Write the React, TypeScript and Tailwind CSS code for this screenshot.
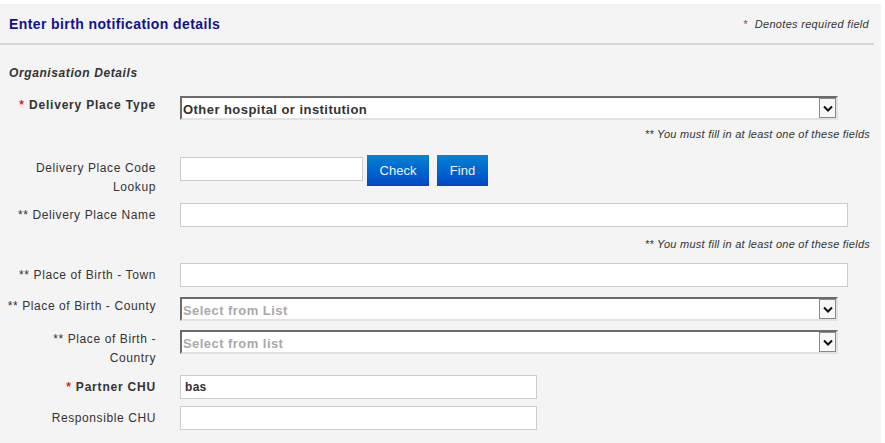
const font = { fontFamily: '"Liberation Sans", Arial, sans-serif' };

function Chevron() {
  return (
    <span className="flex h-[20px] w-[17px] items-center justify-center border border-[#8a8a8a] bg-[#f7f7f7]">
      <svg width="10" height="7" viewBox="0 0 10 7">
        <path d="M1 1.5 L5 5.5 L9 1.5" fill="none" stroke="#111" strokeWidth="2" />
      </svg>
    </span>
  );
}

function Select({ value, placeholder }: { value: string; placeholder?: boolean }) {
  return (
    <div className="flex h-[24px] w-[658px] items-center border-t-2 border-l-2 border-r-2 border-b-2 border-t-[#6b6b6b] border-l-[#6b6b6b] border-r-[#e2e2e2] border-b-[#e2e2e2] bg-white">
      <span
        className={
          "flex-1 pl-[1px] pt-[3px] text-[13px] font-bold tracking-[0.45px] " +
          (placeholder ? "text-[#a9a9a9]" : "text-[#333]")
        }
      >
        {value}
      </span>
      <Chevron />
    </div>
  );
}

function Input({ w, value }: { w: string; value?: string }) {
  return (
    <div className={"flex h-[24px] items-center border border-[#cccccc] bg-white pl-[4px] text-[12px] font-bold tracking-[0.3px] text-[#333] " + w}>
      {value}
    </div>
  );
}

function Label({ children, pt }: { children: React.ReactNode; pt: string }) {
  return (
    <div className={"w-[156px] shrink-0 text-right text-[12px] leading-[19px] tracking-[0.6px] text-[#333] " + pt}>
      {children}
    </div>
  );
}

function Note() {
  return (
    <div className="pr-[11px] text-right text-[11px] italic leading-[14px] tracking-[0.25px] text-[#333]">
      ** You must fill in at least one of these fields
    </div>
  );
}

function Star() {
  return <span className="text-[#d81e1e]">*</span>;
}

export default function App() {
  return (
    <div className="min-h-screen bg-white pt-[4px]" style={font}>
      <div className="mr-[4px] min-h-[439px] bg-[#f4f4f4] pb-[12px]">
        {/* Header */}
        <div className="mr-[7px] flex items-center justify-between border-b-2 border-[#d6d6d6] pb-[9px] pl-[9px] pr-[5px] pt-[10px]">
          <h1 className="text-[14px] font-bold leading-[20px] tracking-[0.4px] text-[#12128c]">Enter birth notification details</h1>
          <span className="text-[11px] italic tracking-[0.3px] text-[#333]">
            <span className="not-italic text-[#d81e1e]">*</span>&nbsp; Denotes required field
          </span>
        </div>

        <div className="mt-[20px] pl-[9px] text-[12px] font-bold italic leading-[16px] tracking-[0.6px] text-[#333]">Organisation Details</div>

        {/* Delivery Place Type */}
        <div className="mt-[15px] flex items-start gap-[24px]">
          <Label pt="pt-0">
            <span className="font-bold tracking-[0.8px]">
              <Star /> Delivery Place Type
            </span>
          </Label>
          <Select value="Other hospital or institution" />
        </div>
        <div className="mt-[7px]">
          <Note />
        </div>

        {/* Code lookup */}
        <div className="mt-[14px] flex items-start gap-[24px]">
          <Label pt="pt-[4px]">
            Delivery Place Code
            <br />
            Lookup
          </Label>
          <div className="flex items-start">
            <div className="mt-[2px]">
              <Input w="w-[183px]" />
            </div>
            <button className="ml-[4px] h-[31px] w-[62px] bg-gradient-to-b from-[#0c82d2] to-[#0046c6] text-[13px] text-[#eef4ff]">
              Check
            </button>
            <button className="ml-[8px] h-[31px] w-[51px] bg-gradient-to-b from-[#0c82d2] to-[#0046c6] text-[13px] text-[#eef4ff]">
              Find
            </button>
          </div>
        </div>

        {/* Delivery place name */}
        <div className="mt-[6px] flex items-start gap-[24px]">
          <Label pt="pt-[3px]">** Delivery Place Name</Label>
          <Input w="w-[668px]" />
        </div>
        <div className="mt-[10px]">
          <Note />
        </div>

        {/* Town */}
        <div className="mt-[12px] flex items-start gap-[24px]">
          <Label pt="pt-[3px]">** Place of Birth - Town</Label>
          <Input w="w-[668px]" />
        </div>

        {/* County */}
        <div className="mt-[10px] flex items-start gap-[24px]">
          <Label pt="pt-0">** Place of Birth - County</Label>
          <Select value="Select from List" placeholder />
        </div>

        {/* Country */}
        <div className="mt-[9px] flex items-start gap-[24px]">
          <Label pt="pt-0">
            ** Place of Birth -
            <br />
            Country
          </Label>
          <Select value="Select from list" placeholder />
        </div>

        {/* Partner CHU */}
        <div className="mt-[7px] flex items-start gap-[24px]">
          <Label pt="pt-[3px]">
            <span className="font-bold tracking-[0.8px]">
              <Star /> Partner CHU
            </span>
          </Label>
          <Input w="w-[357px]" value="bas" />
        </div>

        {/* Responsible CHU */}
        <div className="mt-[7px] flex items-start gap-[24px]">
          <Label pt="pt-[3px]">Responsible CHU</Label>
          <Input w="w-[357px]" />
        </div>
      </div>
    </div>
  );
}
